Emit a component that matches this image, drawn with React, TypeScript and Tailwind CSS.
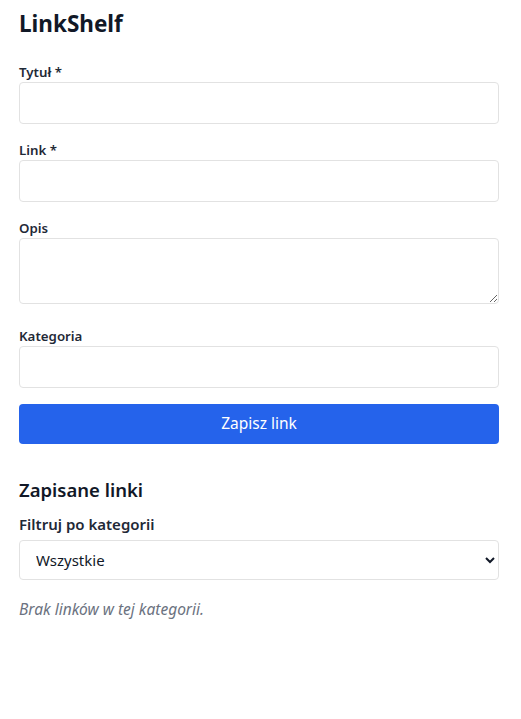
import React from "react";

export default function App() {
  const font = { fontFamily: '"Noto Sans", "Open Sans", sans-serif' };
  return (
    <div className="min-h-screen bg-white text-[#1f2937]" style={font}>
      <div className="pl-[19px] w-[499px]">
        <h1 className="pt-[8px] text-[22.5px] leading-[32px] font-bold text-[#111827]">LinkShelf</h1>
        <form className="mt-[22px]" onSubmit={(e) => e.preventDefault()}>
          <label className="block text-[13.3px] leading-[20px] font-semibold text-[#1f2937]">Tytuł *</label>
          <input className="block w-full h-[42px] border border-[#e2e2e2] rounded-[4px] px-3 mb-[16px]" />
          <label className="block text-[13.3px] leading-[20px] font-semibold text-[#1f2937]">Link *</label>
          <input className="block w-full h-[42px] border border-[#e2e2e2] rounded-[4px] px-3 mb-[16px]" />
          <label className="block text-[13.3px] leading-[20px] font-semibold text-[#1f2937]">Opis</label>
          <textarea className="block w-full h-[66px] border border-[#e2e2e2] rounded-[4px] px-3 mb-[22px]" />
          <label className="block text-[13.3px] leading-[20px] font-semibold text-[#1f2937]">Kategoria</label>
          <input className="block w-full h-[42px] border border-[#e2e2e2] rounded-[4px] px-3 mb-[16px]" />
          <button type="submit" className="block w-full h-[40px] rounded-[4px] bg-[#2563eb] text-white text-[15.5px]">Zapisz link</button>
        </form>
        <h2 className="mt-[32px] text-[18.5px] leading-[28px] font-semibold text-[#111827]">Zapisane linki</h2>
        <label className="block mt-[8px] text-[15px] leading-[24px] font-semibold text-[#1f2937]">Filtruj po kategorii</label>
        <select className="block mt-[4px] w-full h-[40px] border border-[#e2e2e2] rounded-[4px] pl-[12px] pr-[4px] text-[15px] bg-white text-[#111827]">
          <option>Wszystkie</option>
        </select>
        <p className="mt-[17px] text-[15.5px] leading-[24px] italic text-[#6b7280]">Brak linków w tej kategorii.</p>
      </div>
    </div>
  );
}
